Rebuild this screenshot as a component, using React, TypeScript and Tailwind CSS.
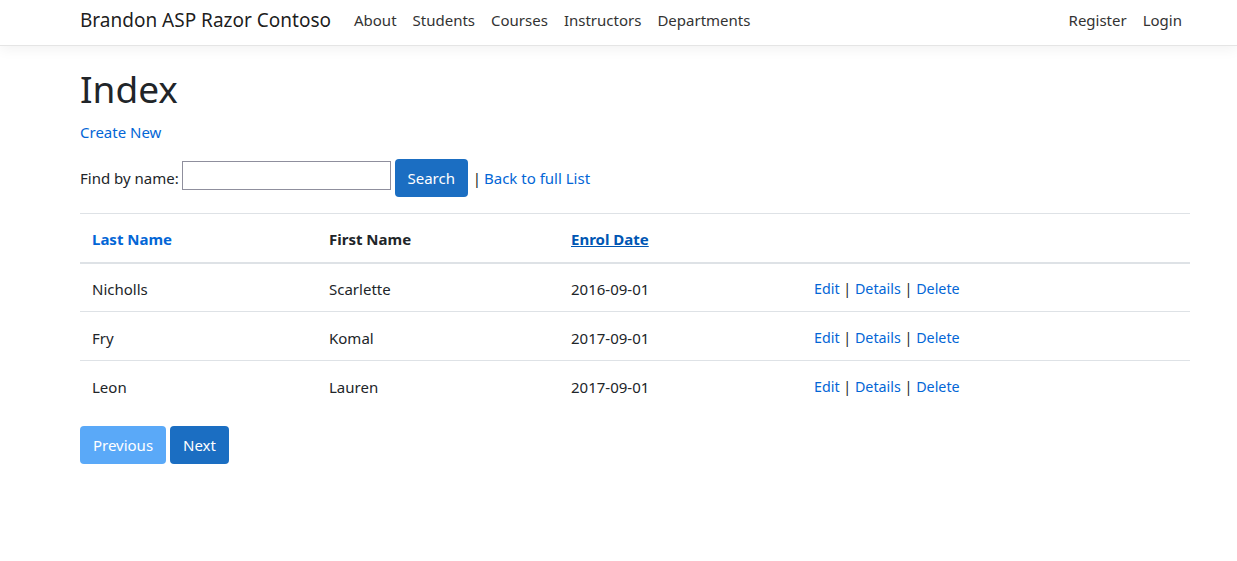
const rows = [
  { last: "Nicholls", first: "Scarlette", date: "2016-09-01" },
  { last: "Fry", first: "Komal", date: "2017-09-01" },
  { last: "Leon", first: "Lauren", date: "2017-09-01" },
];

const font = { fontFamily: '"Segoe UI", "Noto Sans", "Liberation Sans", sans-serif' };

export default function App() {
  return (
    <div className="min-h-[561px] bg-white text-[16px] text-[#212529]" style={font}>
      <header className="h-[46px] border-b border-[#e5e5e5] bg-white shadow-[0_4px_12px_rgba(0,0,0,0.05)]">
        <nav className="ml-[80px] flex h-full w-[1110px] items-center pb-[5px]">
          <a className="mr-[15px] text-[19px] text-black/90">Brandon ASP Razor Contoso</a>
          <ul className="flex items-center text-[15px] text-[#333]">
            {["About", "Students", "Courses", "Instructors", "Departments"].map((item) => (
              <li key={item} className="px-[8px]">{item}</li>
            ))}
          </ul>
          <ul className="ml-auto flex items-center text-[15px] text-[#333]">
            <li className="px-[8px]">Register</li>
            <li className="px-[8px]">Login</li>
          </ul>
        </nav>
      </header>

      <main className="ml-[80px] w-[1110px] pt-[21px]">
        <h1 className="mb-[9px] text-[37px] leading-[1.2] font-normal">Index</h1>
        <p className="mb-[15px]">
          <a className="text-[15px] text-[#0366d6]">Create New</a>
        </p>

        <form className="mb-[16px] flex items-center text-[15px]">
          <span className="mr-[3px]">Find by name:</span>
          <input className="mt-[2px] h-[29px] w-[209px] self-start border border-[#8f8f9d] bg-white" />
          <button type="button" className="ml-[4px] h-[38px] w-[73px] rounded-[4px] bg-[#1b6ec2] text-white">
            Search
          </button>
          <span className="ml-[5px]">|</span>
          <a className="ml-[3px] text-[#0366d6]">Back to full List</a>
        </form>

        <table className="w-full border-collapse text-[15px]">
          <thead>
            <tr className="border-t border-b-2 border-t-[#dee2e6] border-b-[#dee2e6]">
              <th className="h-[49px] w-[237px] px-[12px] pt-[2px] text-left font-bold text-[#0366d6]">Last Name</th>
              <th className="w-[242px] px-[12px] pt-[2px] text-left font-bold">First Name</th>
              <th className="w-[243px] px-[12px] pt-[2px] text-left font-bold">
                <a className="text-[#0056b3] underline">Enrol Date</a>
              </th>
              <th className="px-[12px]"></th>
            </tr>
          </thead>
          <tbody>
            {rows.map((r, i) => (
              <tr key={r.last} className={i > 0 ? "border-t border-[#dee2e6]" : ""}>
                <td className="h-[49px] px-[12px] pt-[3px]">{r.last}</td>
                <td className="px-[12px] pt-[3px]">{r.first}</td>
                <td className="px-[12px] pt-[3px]">{r.date}</td>
                <td className="px-[12px] pt-[3px] text-[14.3px]">
                  <a className="text-[#0366d6]">Edit</a> | <a className="text-[#0366d6]">Details</a> |{" "}
                  <a className="text-[#0366d6]">Delete</a>
                </td>
              </tr>
            ))}
          </tbody>
        </table>

        <div className="mt-[16px] flex gap-[4px] text-[15px]">
          <button type="button" className="h-[38px] w-[86px] rounded-[4px] bg-[#5aa9f8] text-white">
            Previous
          </button>
          <button type="button" className="h-[38px] w-[59px] rounded-[4px] bg-[#1b6ec2] text-white">
            Next
          </button>
        </div>
      </main>
    </div>
  );
}
